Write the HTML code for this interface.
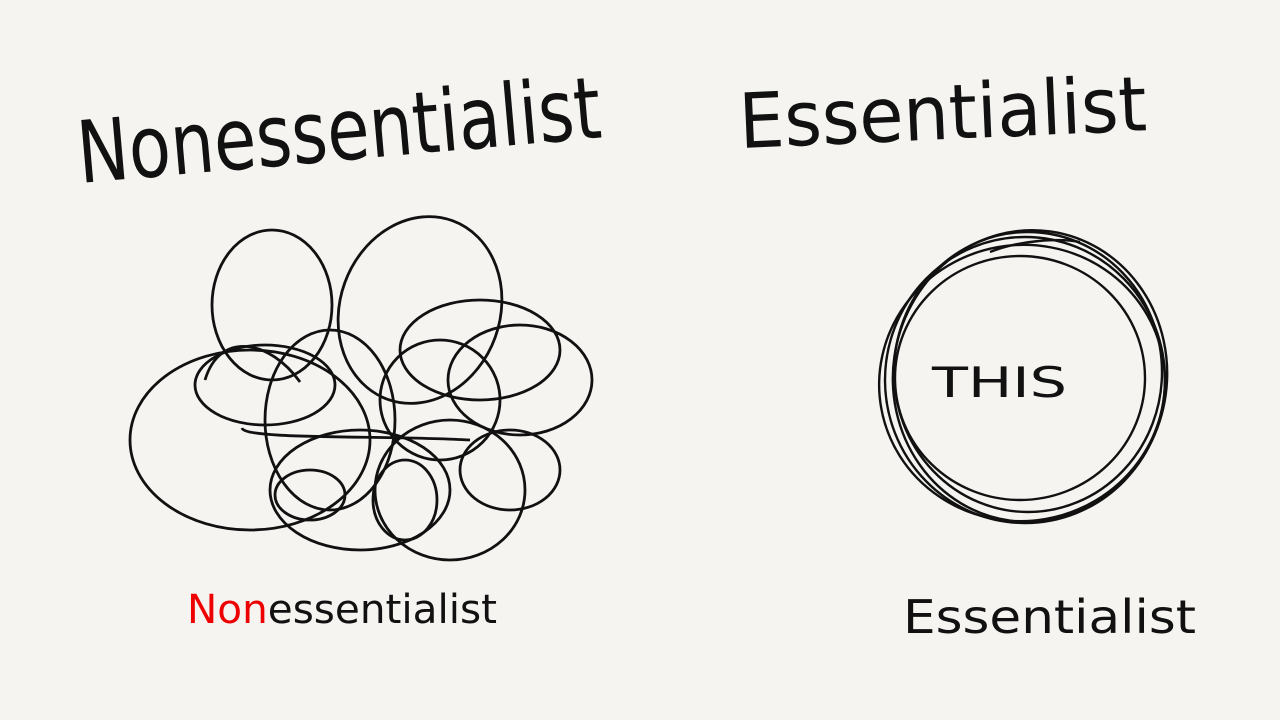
<!DOCTYPE html>
<html><head><meta charset="utf-8"><style>
html,body{margin:0;padding:0;background:#f5f4f1;width:1280px;height:720px;overflow:hidden}
svg{display:block}
text{font-family:"DejaVu Sans","Liberation Sans",sans-serif;fill:#111}
</style></head><body>
<svg width="1280" height="720" viewBox="0 0 1280 720">
<rect width="1280" height="720" fill="#f5f4f1"/>
<text x="80" y="183" font-size="86" font-weight="normal" textLength="525" lengthAdjust="spacingAndGlyphs" transform="rotate(-5 80 183)">Nonessentialist</text>
<text x="740" y="148" font-size="76" font-weight="normal" textLength="408" lengthAdjust="spacingAndGlyphs" transform="rotate(-2.5 740 148)">Essentialist</text>
<g fill="none" stroke="#111" stroke-width="2.8">
<ellipse cx="272" cy="305" rx="60" ry="75"/>
<ellipse cx="420" cy="310" rx="80" ry="95" transform="rotate(20 420 310)"/>
<ellipse cx="480" cy="350" rx="80" ry="50"/>
<ellipse cx="520" cy="380" rx="72" ry="55"/>
<ellipse cx="265" cy="385" rx="70" ry="40"/>
<ellipse cx="250" cy="440" rx="120" ry="90"/>
<ellipse cx="330" cy="420" rx="65" ry="90"/>
<ellipse cx="440" cy="400" rx="60" ry="60"/>
<ellipse cx="360" cy="490" rx="90" ry="60"/>
<ellipse cx="450" cy="490" rx="75" ry="70"/>
<ellipse cx="510" cy="470" rx="50" ry="40"/>
<ellipse cx="310" cy="495" rx="35" ry="25"/>
<ellipse cx="405" cy="500" rx="32" ry="40"/>
<path d="M242 428 C245 440 380 435 470 440"/>
<path d="M205 380 C220 330 270 340 300 382"/>
</g>
<g fill="none" stroke="#111" stroke-width="2.4">
<ellipse cx="1025" cy="380" rx="140" ry="143"/>
<ellipse cx="1030" cy="376" rx="137" ry="146" transform="rotate(8 1030 376)"/>
<ellipse cx="1022" cy="383" rx="143" ry="138" transform="rotate(-10 1022 383)"/>
<ellipse cx="1028" cy="372" rx="134" ry="140"/>
<ellipse cx="1020" cy="378" rx="125" ry="122"/>
<path d="M990 252 C1020 240 1060 238 1080 242"/>
</g>
<text x="932" y="397" font-size="42" font-weight="normal" textLength="135" lengthAdjust="spacingAndGlyphs">THIS</text>
<text x="187" y="623" font-size="40" textLength="310" lengthAdjust="spacingAndGlyphs"><tspan style="fill:#e00">Non</tspan>essentialist</text>
<text x="903" y="633" font-size="46" textLength="293" lengthAdjust="spacingAndGlyphs">Essentialist</text>
</svg>
</body></html>
